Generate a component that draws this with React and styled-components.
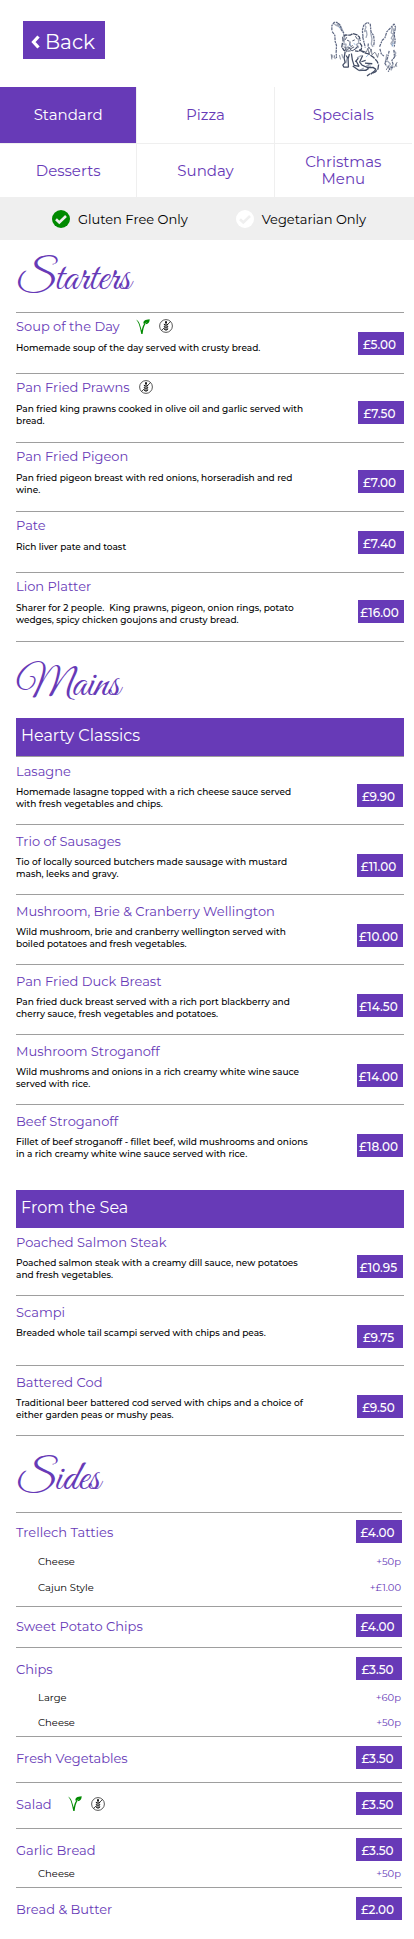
import React, { useState } from "react";
import styled, { createGlobalStyle, css } from "styled-components";

const purple = "#673ab7";
const pale = "#efefef";
const rule = "#9e9e9e";

const GlobalStyle = createGlobalStyle`
  * { box-sizing: border-box; }
  body {
    margin: 0;
    background: #fff;
    color: #000;
    font-family: Montserrat, Inter, "Open Sans", sans-serif;
  }
  button { font-family: inherit; }
`;

const Header = styled.header`
  display: flex;
  justify-content: space-between;
  align-items: flex-start;
  height: 87px;
  padding: 20px 14px 0 23px;
`;

const BackButton = styled.button`
  display: flex;
  align-items: center;
  justify-content: center;
  gap: 5px;
  width: 82px;
  height: 38px;
  margin-top: 1px;
  padding: 3px 2px 0 0;
  border: 0;
  background: ${purple};
  color: #fff;
  font-size: 20px;
  line-height: 24px;
`;

const Tabs = styled.nav`
  display: grid;
  grid-template-columns: repeat(3, 1fr);
  grid-template-rows: 57px 53px;
  padding-right: 2px;
`;

const Tab = styled.button`
  padding: 0 30px 1px;
  border: 0 solid ${pale};
  border-right-width: 1px;
  background: ${(p) => (p.$active ? purple : "#fff")};
  color: ${(p) => (p.$active ? "#fff" : purple)};
  font-size: 15px;
  line-height: 17px;
  &:nth-child(3n) { border-right-width: 0; }
  &:nth-child(-n + 3) { border-bottom-width: 1px; }
`;

const Filters = styled.div`
  display: flex;
  justify-content: center;
  gap: 48px;
  height: 43px;
  padding-left: 4px;
  background: ${pale};
`;

const FilterLabel = styled.label`
  display: flex;
  align-items: center;
  gap: 8px;
  font-size: 13px;
  line-height: 18px;
`;

const TickWrap = styled.span`
  position: relative;
  display: block;
  width: 18px;
  height: 18px;
  color: ${pale};
  svg {
    position: absolute;
    inset: 0;
    pointer-events: none;
  }
`;

const TickBox = styled.input.attrs({ type: "checkbox" })`
  appearance: none;
  display: block;
  width: 18px;
  height: 18px;
  margin: 0;
  border-radius: 50%;
  background: #fff;
  &:checked { background: #008a00; }
`;

const Menu = styled.main`
  padding: 0 10px 18px 16px;
`;

const Section = styled.section`
  & + & { border-top: 1px solid ${rule}; padding-top: 4px; }
`;

const SectionTitle = styled.h2`
  margin: 0;
  padding-top: 14px;
  height: 72px;
  color: ${purple};
  font-family: "Great Vibes", "Liberation Serif", serif;
  font-size: 42px;
  font-weight: 400;
  line-height: 52px;
`;

const Banner = styled.h3`
  margin: 0;
  padding: 0 5px 3px;
  background: ${purple};
  color: #fff;
  font-size: 16px;
  font-weight: 400;
  line-height: 35px;
`;

const Group = styled.div`
  & + & { padding-top: 16px; }
  & + & article:first-of-type { border-top: 0; }
`;

const DishText = styled.p`
  margin: 8px 0 0;
  font-size: 9px;
  font-weight: 500;
  line-height: 12px;
  white-space: pre-line;
`;

const DishRow = styled.article`
  display: flex;
  justify-content: space-between;
  border-top: 1px solid ${rule};
  ${(p) =>
    p.$roomy
      ? css`
          min-height: 70px;
          padding: 8px 1px 14px 0;
          ${DishText} { margin-top: 7px; }
          ${Group} &:first-of-type { min-height: 0; padding-top: 6px; }
        `
      : css`
          min-height: 61px;
          padding: 5px 0 15px;
        `}
`;

const DishName = styled.h4`
  display: flex;
  align-items: center;
  margin: 0;
  color: ${purple};
  font-size: 13px;
  font-weight: 400;
  line-height: 16px;
`;

const Price = styled.span`
  flex: none;
  align-self: flex-end;
  width: 46px;
  height: 23px;
  margin-bottom: ${(p) => (p.$raised ? "3px" : "0")};
  padding: 2px 3px 0 0;
  background: ${purple};
  color: #fff;
  font-size: 12px;
  font-weight: 500;
  line-height: 21px;
  text-align: center;
`;

const SideList = styled.div`
  padding-right: 2px;
`;

const spacing = {
  open: { top: 7, bottom: 5, gap: 6, extra: 26 },
  tight: { top: 7, bottom: 10 },
  medium: { top: 9, bottom: 1, gap: 5, extra: 25 },
  plain: { top: 9, bottom: 13 },
  snug: { top: 9, bottom: 1, gap: 0, extra: 25 },
};

const SideRow = styled.article`
  border-top: 1px solid ${rule};
  padding-top: ${(p) => spacing[p.$space].top}px;
  padding-bottom: ${(p) => spacing[p.$space].bottom}px;
`;

const SideHead = styled.div`
  display: flex;
  justify-content: space-between;
  align-items: center;
`;

const Extras = styled.ul`
  margin: ${(p) => spacing[p.$space].gap}px 0 0;
  padding: 0 1px 0 22px;
  list-style: none;
  font-size: 10px;
  line-height: ${(p) => spacing[p.$space].extra}px;
`;

const Extra = styled.li`
  display: flex;
  justify-content: space-between;
`;

const ExtraPrice = styled.span`
  color: ${purple};
`;

const VegSvg = styled.svg`
  margin-left: 16px;
`;

const GlutenSvg = styled.svg`
  margin-left: 9px;
`;

function VegIcon() {
  return (
    <VegSvg width="14" height="15" viewBox="0 0 14 15" fill="#008a00" role="img" aria-label="Vegetarian">
      <path d="M0 .5c2.300 1 3.300 3 4.100 5.700l1.700 5.200C6.300 8.500 7 6.300 8.300 4.500L9.400 5C7.900 7.400 7.100 10.700 6.600 15H5.300C4.200 9.500 3 3.200 0 .5z" />
      <path d="M7.500 4.600C7 2 9 .7 13.700.3c0 3.300-1.700 5.200-4.600 4.800L11.200 2.700 8.300 5z" />
    </VegSvg>
  );
}

function GlutenIcon() {
  return (
    <GlutenSvg width="14" height="14" viewBox="0 0 28 28" fill="none" stroke="#222" role="img" aria-label="Gluten free">
      <circle cx="14" cy="14" r="12.800" strokeWidth="1.500" />
      <path d="M23 5l-6 6M10 18l-5 5" strokeWidth="1.600" />
      <path d="M14 8v16" strokeWidth="1.600" />
      <g fill="#111" stroke="none">
        <ellipse cx="14" cy="6.500" rx="2" ry="2.600" />
        <path d="M13.500 13.500c-3 0-4-1.500-4-4 3 .3 4 1.500 4 4zM14.500 13.500c3 0 4-1.500 4-4-3 .3-4 1.500-4 4zM13.500 18c-3 0-4-1.500-4-4 3 .3 4 1.500 4 4zM14.500 18c3 0 4-1.500 4-4-3 .3-4 1.500-4 4zM13.500 22.500c-3 0-4-1.500-4-4 3 .3 4 1.500 4 4zM14.500 22.500c3 0 4-1.500 4-4-3 .3-4 1.500-4 4z" />
      </g>
    </GlutenSvg>
  );
}

function LionLogo() {
  return (
    <svg width="70" height="58" viewBox="15 15 210 175" fill="none" strokeLinejoin="bevel" role="img" aria-label="Lion and standing stones">
      <g stroke="#a4abba" strokeWidth="4">
        <path d="M27 26l7 6 5-4 4 10 7 2M36 24l3 12M119 31l4 5-5 14 6-3 2 12-3 10M137 52l4 20-2 16 5 8M203 36l-4 18 7 4-7 12 6 5-7 11 6 8M208 108l5 6-4 12 5-5M187 138l10 10-8 7 14 3-5 9" />
        <path d="M59 64l-3 26 7-3-2 13 8-3M100 70l1 15-7 4 7 8-12 4M66 130l-4 16M110 122l-14 7M136 146l-12 9 14-1M124 166l-22 2 14-8" />
        <path d="M40 27l9 12 7 16M205 40l3 25-5 22M186 118l-5 26M196 158l9-9M20 120l4 9M50 118l4 12M212 147l4 9" />
      </g>
      <g stroke="#5b6580" strokeWidth="3.600" strokeDasharray="9 2.500 6 2">
        <path d="M20 46L20 32L27 22L36 22L46 31L48 44L55 53L57 62M21 50L29 61L30 80L34 92L33 112L34 130" />
        <path d="M114 66L112 47L116 31L127 22L136 28L138 50L146 62L148 80L146 94M113 66L118 86L121 98M130 86L129 96L138 104" />
        <path d="M164 96L172 76L180 69L186 50L198 38L208 27L212 37L208 58L211 76L208 98M165 102L169 117L177 124M193 108L188 130L180 146L186 155M207 105L209 127L201 137L205 149M206 156L196 160L190 171" />
      </g>
      <g stroke="#414b63" strokeWidth="3.800">
        <path d="M54 80L53 67L61 60L75 61L84 56L96 60L103 66L106 78M52 84L50 96L56 106L65 111M104 84L110 92L109 103L100 110L90 108" strokeDasharray="14 2" />
        <path d="M66 76l7 3M82 78l7-3M75 80l-1 11 4 4 5-3M68 96l10 5 9-5M60 75l5-8M91 64l6 9M57 95l8 9 8-3 8 7 11-6 6-9M59 103l9 6 9-1" strokeWidth="2.800" />
        <path d="M60 111L57 130L60 143L53 151L56 157L70 157L69 132L73 118M79 116L82 136L87 152L102 155L93 138M63 122l5 8" />
        <path d="M103 104L116 113L130 117L145 127L156 139L161 150L159 163L151 172L138 178M103 106l12 5M112 109l12 4" strokeDasharray="16 3" />
        <path d="M100 130l-9 11M113 122l-9 20 7 9M111 151l18 8 15-1 9 6-6 7M83 154l17 12 22 1 9-6M109 141l13-4M120 145l22 2M137 178l11-8M126 184l9-7" />
        <path d="M18 118l2 16M27 121l3 12M43 121l3 13M124 112l5-12 3 18 7-15 2 17 9-8M151 113l7 15 3-13M184 166l6-11 4 9M217 142l-8 16" strokeWidth="2" />
      </g>
      <g stroke="#7aa6d6" strokeWidth="2.400">
        <path d="M71 92l6-3M86 86l5 3M206 84l-4 11M129 121l-6 6M42 36l4 4" />
      </g>
    </svg>
  );
}

const starters = [
  { name: "Soup of the Day", veg: true, gf: true, text: "Homemade soup of the day served with crusty bread.", price: "£5.00" },
  { name: "Pan Fried Prawns", gf: true, text: "Pan fried king prawns cooked in olive oil and garlic served with\nbread.", price: "£7.50" },
  { name: "Pan Fried Pigeon", text: "Pan fried pigeon breast with red onions, horseradish and red\nwine.", price: "£7.00" },
  { name: "Pate", text: "Rich liver pate and toast", price: "£7.40" },
  { name: "Lion Platter", text: "Sharer for 2 people.\u00a0 King prawns, pigeon, onion rings, potato\nwedges, spicy chicken goujons and crusty bread.", price: "£16.00" },
];

const classics = [
  { name: "Lasagne", text: "Homemade lasagne topped with a rich cheese sauce served\nwith fresh vegetables and chips.", price: "£9.90" },
  { name: "Trio of Sausages", text: "Tio of locally sourced butchers made sausage with mustard\nmash, leeks and gravy.", price: "£11.00" },
  { name: "Mushroom, Brie & Cranberry Wellington", text: "Wild mushroom, brie and cranberry wellington served with\nboiled potatoes and fresh vegetables.", price: "£10.00" },
  { name: "Pan Fried Duck Breast", text: "Pan fried duck breast served with a rich port blackberry and\ncherry sauce, fresh vegetables and potatoes.", price: "£14.50" },
  { name: "Mushroom Stroganoff", text: "Wild mushroms and onions in a rich creamy white wine sauce\nserved with rice.", price: "£14.00" },
  { name: "Beef Stroganoff", text: "Fillet of beef stroganoff - fillet beef, wild mushrooms and onions\nin a rich creamy white wine sauce served with rice.", price: "£18.00" },
];

const sea = [
  { name: "Poached Salmon Steak", text: "Poached salmon steak with a creamy dill sauce, new potatoes\nand fresh vegetables.", price: "£10.95" },
  { name: "Scampi", text: "Breaded whole tail scampi served with chips and peas.", price: "£9.75" },
  { name: "Battered Cod", text: "Traditional beer battered cod served with chips and a choice of\neither garden peas or mushy peas.", price: "£9.50" },
];

const sides = [
  { name: "Trellech Tatties", price: "£4.00", space: "open", extras: [["Cheese", "+50p"], ["Cajun Style", "+£1.00"]] },
  { name: "Sweet Potato Chips", price: "£4.00", space: "tight" },
  { name: "Chips", price: "£3.50", space: "medium", extras: [["Large", "+60p"], ["Cheese", "+50p"]] },
  { name: "Fresh Vegetables", price: "£3.50", space: "plain" },
  { name: "Salad", veg: true, gf: true, price: "£3.50", space: "plain" },
  { name: "Garlic Bread", price: "£3.50", space: "snug", extras: [["Cheese", "+50p"]] },
  { name: "Bread & Butter", price: "£2.00", space: "medium" },
];

function Name({ dish }) {
  return (
    <DishName>
      {dish.name}
      {dish.veg && <VegIcon />}
      {dish.gf && <GlutenIcon />}
    </DishName>
  );
}

function Dishes({ items, roomy }) {
  return items.map((dish) => (
    <DishRow key={dish.name} $roomy={roomy}>
      <div>
        <Name dish={dish} />
        <DishText>{dish.text}</DishText>
      </div>
      <Price $raised>{dish.price}</Price>
    </DishRow>
  ));
}

function Side({ side }) {
  return (
    <SideRow $space={side.space}>
      <SideHead>
        <Name dish={side} />
        <Price>{side.price}</Price>
      </SideHead>
      {side.extras && (
        <Extras $space={side.space}>
          {side.extras.map(([name, price]) => (
            <Extra key={name}>
              <span>{name}</span>
              <ExtraPrice>{price}</ExtraPrice>
            </Extra>
          ))}
        </Extras>
      )}
    </SideRow>
  );
}

function Filter({ label, initial }) {
  const [on, setOn] = useState(initial);
  return (
    <FilterLabel>
      <TickWrap>
        <TickBox checked={on} onChange={() => setOn(!on)} />
        <svg width="18" height="18" viewBox="0 0 18 18" fill="none" stroke="currentColor" strokeWidth="2.600">
          <path d="M4 9.300l3.300 3.200L14 6" />
        </svg>
      </TickWrap>
      {label}
    </FilterLabel>
  );
}

const tabs = ["Standard", "Pizza", "Specials", "Desserts", "Sunday", "Christmas Menu"];

export default function App() {
  const [active, setActive] = useState("Standard");
  return (
    <>
      <GlobalStyle />
      <Header>
        <BackButton>
          <svg width="9" height="14" viewBox="0 0 9 14" fill="none" stroke="currentColor" strokeWidth="3.200" aria-hidden="true">
            <path d="M7.500 1.500L2.500 7l5 5.500" />
          </svg>
          Back
        </BackButton>
        <LionLogo />
      </Header>
      <Tabs>
        {tabs.map((tab) => (
          <Tab key={tab} $active={tab === active} onClick={() => setActive(tab)}>
            {tab}
          </Tab>
        ))}
      </Tabs>
      <Filters>
        <Filter label="Gluten Free Only" initial />
        <Filter label="Vegetarian Only" initial={false} />
      </Filters>
      <Menu>
        <Section>
          <SectionTitle>Starters</SectionTitle>
          <Dishes items={starters} />
        </Section>
        <Section>
          <SectionTitle>Mains</SectionTitle>
          <Group>
            <Banner>Hearty Classics</Banner>
            <Dishes items={classics} roomy />
          </Group>
          <Group>
            <Banner>From the Sea</Banner>
            <Dishes items={sea} roomy />
          </Group>
        </Section>
        <Section>
          <SectionTitle>Sides</SectionTitle>
          <SideList>
            {sides.map((side) => (
              <Side key={side.name} side={side} />
            ))}
          </SideList>
        </Section>
      </Menu>
    </>
  );
}
